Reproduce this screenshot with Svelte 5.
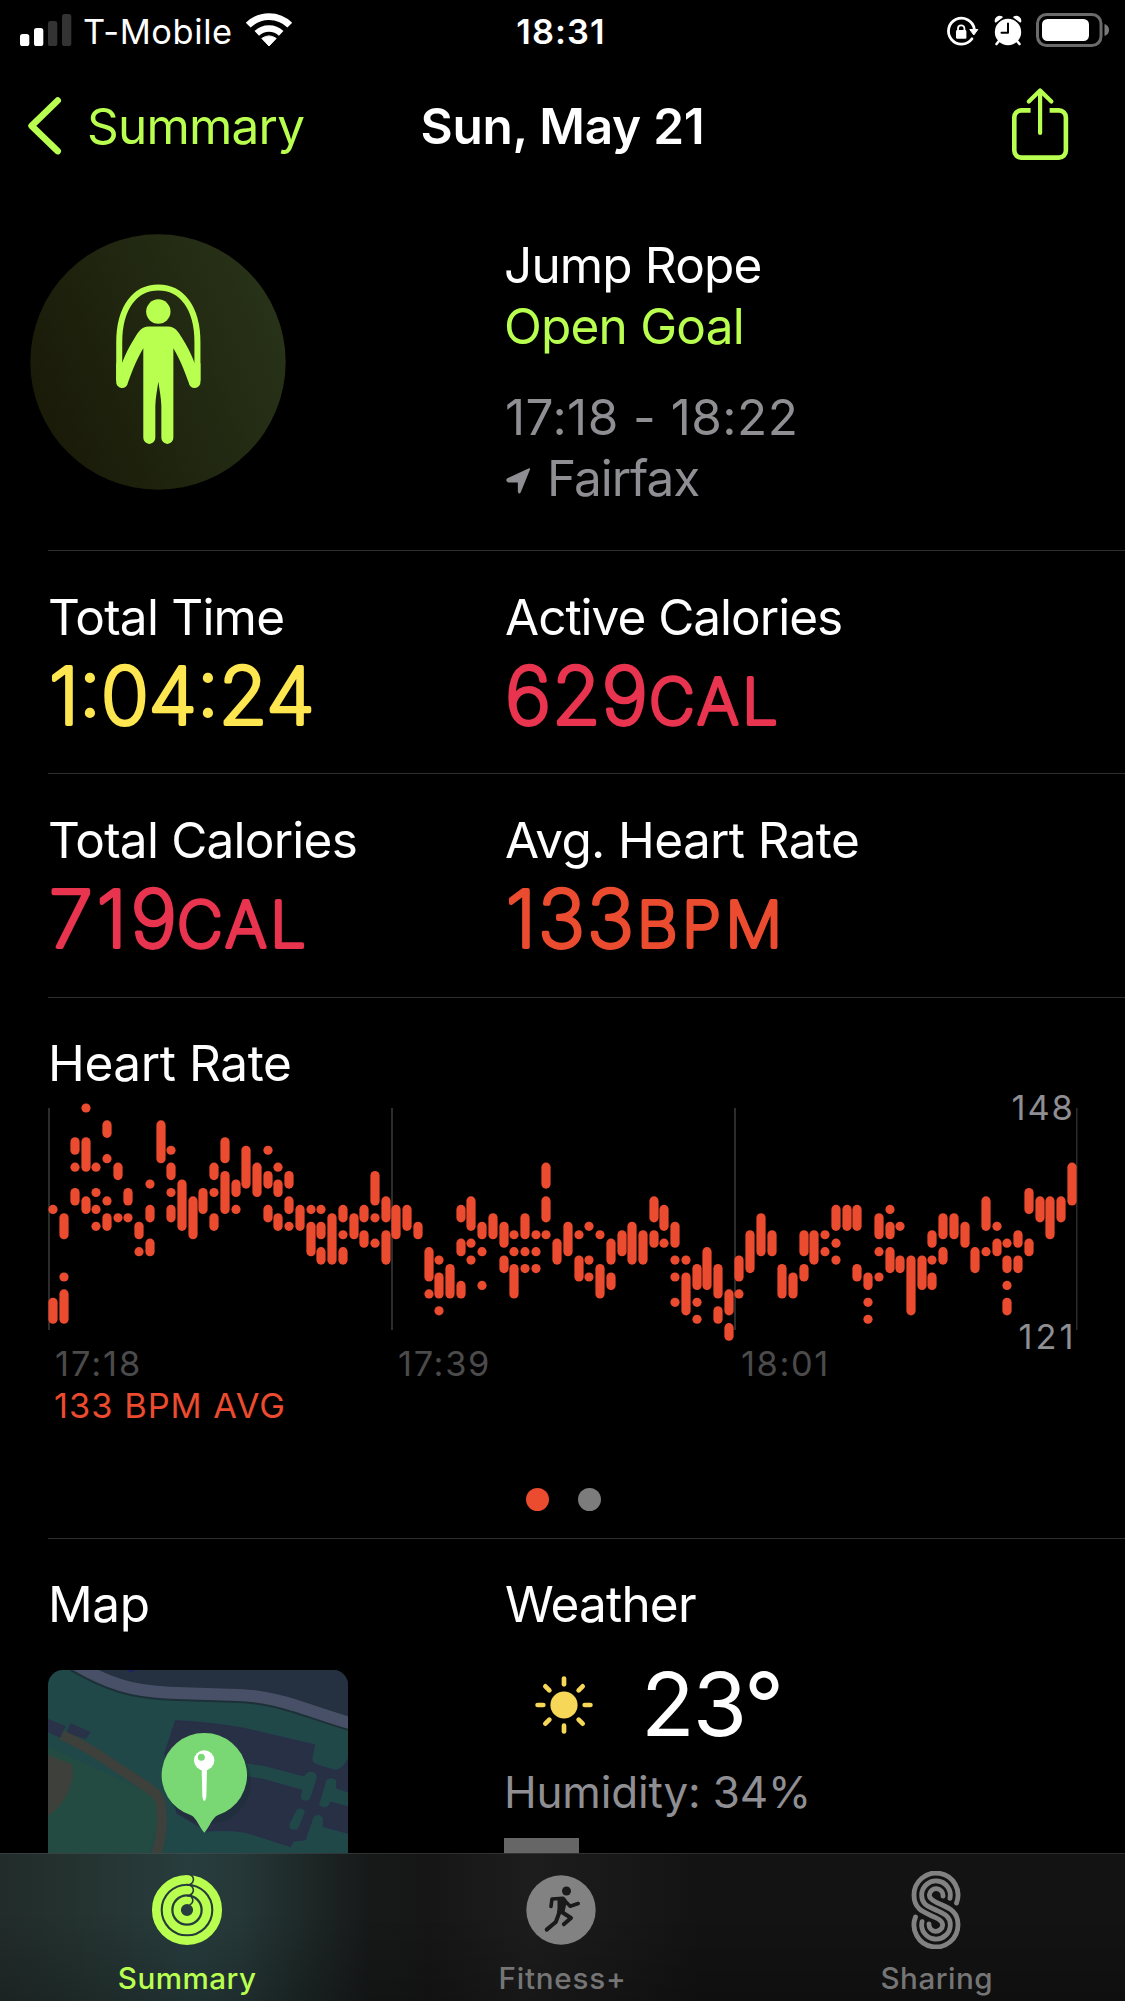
<script>
  // Heart-rate samples: one entry per column, each a list of [from, to] steps below 148 BPM.
  const heartRate = [
    '12 23-25', '13-15 20 22-25', '4-5 7 10-11', '0 4-7 11-12', '7 10 12 14', '2-3 6 11 13-14', '7-8 13', '10-11 13',
    '14-15 17', '9 12-13 16-17', '2-6', '5 7-8 10 12-13', '9-14', '11-15', '10-12', '7-8 10 13-14',
    '4-6 8-12', '9-10 12', '5-9', '7-10', '5 8-9 12-13', '7 9-10 13-14', '8-9 11-12 14', '12-14',
    '12 14-17', '12 14-15 17-18', '13-18', '12-13 15 17-18', '13-15', '12-13 15-16', '8-11 13 16', '11-13 15-18',
    '12-15', '12-14', '14-15', '17-20 22', '18 20-22 24', '19-22', '12-13 16-17 21-22', '11-14 16 18',
    '14-15 17 21', '13-15', '14-16 18-19', '15 17 19-22', '13-15 17 19', '15 17 19', '7-9 11-13 15', '16-18',
    '14-17', '15 18-20', '14 18 20', '15 19-22', '16-18 20-21', '15-17', '14-18', '15-18',
    '11-13 15-16', '12-14 16', '14-16 18 20 23', '18 20-24', '19-21 23 25', '17-21', '19-22 24-25', '22-24 26-27',
    '18-20 22', '15-19', '13-17', '15-17', '19-22', '20-22', '15-17 19-20', '15-18',
    '15 17', '12-14 16 18', '12-14', '12-14 19-20', '20-21 23 25', '13-15 17 20', '12 14-15 17-19', '14 18-19',
    '18-24', '18-21', '15-16 18 20-21', '13-15 17-18', '13-15', '14-16', '17-19', '11-14 17',
    '14 16-17', '16 18-19 21 23-24', '15-16 18-19', '10-12 16-17', '11-13', '11-15', '11-13', '7-11'
  ];

  const bars = heartRate.flatMap((column, i) =>
    column.split(' ').map((range) => {
      const [from, to = from] = range.split('-').map(Number);
      const top = 15 + from * 8.45 - 4.6;
      return { x: Math.round(i * 10.72 + 0.36) + 0.4, y: top, h: (to - from) * 8.45 + 9.2 };
    })
  );

  const rays = [0, 45, 90, 135, 180, 225, 270, 315];
  const rings = [
    { r: 30.7, w: 8.7 },
    { r: 20, w: 8.5 },
    { r: 9.8, w: 7.4 }
  ];
</script>

<div class="screen">
  <header class="status">
    <div class="carrier">
      <svg class="signal" width="52" height="34" viewBox="0 0 52 34">
        <rect x="0" y="21" width="9.3" height="12" rx="2.6" fill="#fff" />
        <rect x="14" y="15" width="9.3" height="18" rx="2.6" fill="#fff" />
        <rect x="28" y="8" width="9.3" height="25" rx="2.6" fill="#333" />
        <rect x="42" y="1" width="9.3" height="32" rx="2.6" fill="#333" />
      </svg>
      <span class="network">T-Mobile</span>
      <svg class="wifi" width="48" height="36" viewBox="-24 -34 48 36">
        <path d="M0 0L-7.2-7.6Q0-12.6 7.2-7.6Z" fill="#fff" stroke="#fff" stroke-linejoin="round" />
        <path d="M-12.2-12.6A17.8 17.8 0 0 1 12.2-12.6" fill="none" stroke="#fff" stroke-width="6.6" />
        <path d="M-20.8-20.8A29.5 29.5 0 0 1 20.8-20.8" fill="none" stroke="#fff" stroke-width="6.8" />
      </svg>
    </div>
    <span class="clock">18:31</span>
    <div class="indicators">
      <svg width="34" height="36" viewBox="945 14 34 36">
        <path d="M974.3 29A13 13 0 1 0 972 38.8" fill="none" stroke="#fff" stroke-width="2.8" stroke-linecap="round" />
        <path d="M969.8 29.5H977.8L973.8 35Z" fill="#fff" stroke="#fff" stroke-linejoin="round" />
        <rect x="956" y="30" width="10.4" height="8.8" rx="1.4" fill="#fff" />
        <path d="M958 31V28.5A3.2 3.2 0 0 1 964.4 28.5V31" fill="none" stroke="#fff" stroke-width="1.8" />
      </svg>
      <svg class="alarm" width="30" height="36" viewBox="993 14 30 36">
        <circle cx="1008" cy="32" r="13.2" fill="#fff" />
        <path d="M1008 23.500V32.700H1001.500" fill="none" stroke="#000" stroke-width="2" stroke-linecap="round" stroke-linejoin="round" />
        <path d="M995.600 21.800A4.200 4.200 0 0 1 1002 17.200ZM1020.400 21.800A4.200 4.200 0 0 0 1014 17.200Z" fill="#fff" stroke="#fff" stroke-width="1.500" stroke-linejoin="round" />
        <path d="M999 41L996.500 44M1017 41L1019.500 44" stroke="#fff" stroke-width="2.600" stroke-linecap="round" />
      </svg>
      <svg class="battery" width="74" height="36" viewBox="1036 12 74 36">
        <rect x="1037.500" y="14.500" width="63.500" height="31" rx="9" fill="none" stroke="#6b6b6b" stroke-width="3" />
        <rect x="1042" y="19" width="47" height="22" rx="5.500" fill="#fff" />
        <path d="M1104.500 24Q1109 25.500 1109 30T1104.500 36Z" fill="#7a7a7a" />
      </svg>
    </div>
  </header>

  <nav class="nav">
    <div class="back">
      <svg width="34" height="60" viewBox="28 96 34 60">
        <path d="M57.700 100.500L31.600 125.800L57.700 151.100" fill="none" stroke="#b9ff4f" stroke-width="6.600" stroke-linecap="round" stroke-linejoin="round" />
      </svg>
      <span>Summary</span>
    </div>
    <h1>Sun, May 21</h1>
    <svg class="share" width="58" height="74" viewBox="1011 87 58 74">
      <g fill="none" stroke="#b9ff4f" stroke-width="4.600" stroke-linejoin="round">
        <path d="M1030.600 110.400H1021.300A7 7 0 0 0 1014.300 117.400V150.600A7 7 0 0 0 1021.300 157.600H1058.900A7 7 0 0 0 1065.900 150.600V117.400A7 7 0 0 0 1058.900 110.400H1049.600" />
        <path d="M1040.100 91V133M1028.800 101.500L1040.100 90.500L1051.400 101.500" stroke-width="4.200" stroke-linecap="round" />
      </g>
    </svg>
  </nav>

  <main>
    <section class="workout">
      <svg class="badge" width="256" height="256" viewBox="90 71 766 766">
        <defs>
          <linearGradient id="disc" x1="0" y1="0.7" x2="1" y2="0.3">
            <stop offset="0" stop-color="#191a07" />
            <stop offset="1" stop-color="#283319" />
          </linearGradient>
        </defs>
        <circle cx="473" cy="454" r="382" fill="url(#disc)" />
        <g fill="#b9ff4f">
          <path d="M357 510V395C357 290 405 231 474 231S591 290 591 395V510" fill="none" stroke="#b9ff4f" stroke-width="18" />
          <circle cx="474" cy="303" r="36.500" />
          <path d="M445 348H503C525 349 532 362 545 382C560 405 572 430 583 458L600 458V512A17.500 17.500 0 0 1 565 516C550 475 538 445 519 413V681A18 18 0 0 1 483 681V585C482 560 478 540 474 513C470 540 466 560 465 585V681A18 18 0 0 1 429 681V413C410 445 398 475 383 516A17.500 17.500 0 0 1 348 512V458H365C376 430 388 405 403 382C416 362 423 349 445 348Z" />
        </g>
      </svg>
      <div class="details">
        <p class="name">Jump Rope</p>
        <p class="goal">Open Goal</p>
        <p class="time">17:18 - 18:22</p>
        <p class="place">
          <svg class="arrow" width="26" height="28" viewBox="78 740 78 84">
            <path d="M83 776L148 746L120 815Q117 819 116 814V784H85Q79 780 83 776Z" fill="#8e8e93" stroke="#8e8e93" stroke-width="5" stroke-linejoin="round" />
          </svg>
          <span>Fairfax</span>
        </p>
      </div>
    </section>

    <section class="row">
      <div class="stat">
        <h2 class="ls8">Total Time</h2>
        <svg class="value yellow" width="400" height="110">
          <text class="num t1" x="1" y="85.500">1:04:24</text>
        </svg>
      </div>
      <div class="stat">
        <h2 class="ls10">Active Calories</h2>
        <svg class="value red" width="400" height="110">
          <text class="num t2" x="0" y="85.500">629</text>
          <text class="unit u1" x="144" y="85.500">CAL</text>
        </svg>
      </div>
    </section>

    <section class="row second">
      <div class="stat">
        <h2 class="ls8">Total Calories</h2>
        <svg class="value red" width="400" height="110">
          <text class="num t4" x="1" y="85.500">719</text>
          <text class="unit u1" x="129" y="85.500">CAL</text>
        </svg>
      </div>
      <div class="stat">
        <h2 class="ls6">Avg. Heart Rate</h2>
        <svg class="value orange" width="400" height="110">
          <text class="num t3" x="1" y="85.500">133</text>
          <text class="unit u2" x="132" y="85.500">BPM</text>
        </svg>
      </div>
    </section>

    <section class="heart">
      <h2>Heart Rate</h2>
      <svg class="chart" width="1030" height="293" viewBox="0 0 1030 293">
        <g fill="#2c2c2c">
          <rect x="0" y="15" width="2" height="222" />
          <rect x="343" y="15" width="2" height="222" />
          <rect x="686" y="15" width="2" height="222" />
          <rect x="1028" y="15" width="1.500" height="222" />
        </g>
        <g fill="#eb4b2e">
          {#each bars as bar}
            <rect x={bar.x} y={bar.y} width="9.200" height={bar.h} rx="4.600" />
          {/each}
        </g>
        <g class="ticks">
          <text x="7" y="283" letter-spacing="1.950">17:18</text>
          <text x="350" y="283" letter-spacing="1.650">17:39</text>
          <text x="693" y="283" letter-spacing="1.600">18:01</text>
        </g>
        <g class="limits">
          <text x="963.500" y="27" letter-spacing="1.900">148</text>
          <text x="970.500" y="256" letter-spacing="3">121</text>
        </g>
      </svg>
      <p class="average">133 BPM AVG</p>
      <div class="pager"><i class="on"></i><i></i></div>
    </section>

    <section class="lower">
      <div class="mapcol">
        <h2 class="maptitle">Map</h2>
        <svg class="map" width="300" height="300" viewBox="54 90 900 900">
          <rect x="54" y="90" width="900" height="900" fill="#214848" />
          <path d="M54 320L380 470V560L350 660V990H54Z" fill="#234b41" />
          <path d="M115 80C230 150 320 165 420 168L600 170C720 172 800 210 954 262V80Z" fill="#253040" />
          <path d="M130 74C235 135 310 157 420 161L600 167C735 166 830 215 960 252" fill="none" stroke="#1d3038" stroke-width="42" />
          <path d="M130 70C235 132 310 154 420 158L600 164C735 163 830 212 960 249" fill="none" stroke="#485067" stroke-width="36" />
          <path d="M292 90H316L304 98Z" fill="#1b2268" />
          <path d="M54 345L125 373C135 410 120 480 54 528Z" fill="#3e413b" />
          <path d="M54 237L108 258L90 293L54 277ZM122 250L182 276L168 298L108 280Z" fill="#2a3249" />
          <path d="M95 285C160 315 200 340 240 368C300 410 360 440 383 468C402 500 398 580 380 640L372 700" fill="none" stroke="#3d403b" stroke-width="30" />
          <path d="M436 242C500 244 570 252 640 264L854 314L846 355Q845 368 860 374L915 391Q940 390 960 345V582L880 560V535Q868 515 850 530L826 600L790 604L782 620L650 578Q600 568 530 574L440 520L404 340Z" fill="#273044" stroke="#2a2c4c" stroke-width="2" />
          <g fill="#214848" stroke="#2a2c4c" stroke-width="2">
            <path d="M640 368L700 376L822 408Q830 393 845 394Q863 398 861 415L842 475Q835 486 820 482Q808 478 812 465L815 450L700 418L640 408Z" />
            <path d="M889 418Q905 408 920 420V445L960 458V502L902 486L896 498Q880 510 866 494Z" />
            <path d="M800 508Q815 498 826 514L806 566Q795 576 780 566Q775 560 777 552Z" />
          </g>
          <ellipse cx="535" cy="425" rx="128" ry="128" fill="#172a35" opacity="0.35" />
          <path d="M523 279A126.500 126.500 0 0 1 563 526C545 535 540 560 523 578C506 560 501 535 483 526A126.500 126.500 0 0 1 523 279Z" fill="#79d874" />
          <path d="M515 385H531L529 470Q523 495 517 470Z" fill="#fff" />
          <circle cx="522.500" cy="361" r="30.500" fill="#fff" />
          <circle cx="514" cy="352" r="10.500" fill="#79d874" />
        </svg>
      </div>
      <div class="weather">
        <h2 class="ls9">Weather</h2>
        <div class="now">
          <svg width="60" height="60" viewBox="-30 -30 60 60">
            <circle r="13.600" fill="#f7d757" />
            {#each rays as a}
              <path d="M0-20.700V-26.400" transform={`rotate(${a})`} stroke="#f7d757" stroke-width="4.700" stroke-linecap="round" />
            {/each}
          </svg>
          <span>23°</span>
        </div>
        <p class="humidity">Humidity: 34%</p>
        <div class="logo"></div>
      </div>
    </section>
  </main>

  <footer class="tabs">
    <div class="tab active">
      <svg width="78" height="78" viewBox="-39 -39 78 78">
        {#each rings as ring}
          <circle r={ring.r} fill="none" stroke="#b9ff4f" stroke-width={ring.w} />
          <path
            d={`M0 ${-ring.r - ring.w / 2 - 0.6}A${ring.w / 2 + 0.8} ${ring.w / 2 + 0.8} 0 0 1 2.500 ${-ring.r + ring.w / 2 + 0.8}`}
            fill="none" stroke="#263a3a" stroke-width="1.600" />
        {/each}
      </svg>
      <span>Summary</span>
    </div>
    <div class="tab">
      <svg width="78" height="78" viewBox="-39 -39 78 78">
        <circle r="34.700" fill="#828282" />
        <circle cx="5.500" cy="-19" r="4.500" fill="#1a1a1a" />
        <g fill="none" stroke="#1a1a1a" stroke-width="3.600" stroke-linecap="round" stroke-linejoin="round">
          <path d="M2-11.800L-9-11L-10-3.500M4-9L9.200-3.800L17.200-6.500" />
          <path d="M-1.500 2L-5.200 12L-14.300 19.600M0 1.500L10 8L2.800 14.300" stroke-width="4" />
        </g>
        <path d="M-3.500-12.800H3Q6.500-11 5.500-7L3.500 2Q1 5-4 3.500L-3.500-2Z" fill="#1a1a1a" />
      </svg>
      <span class="wide">Fitness+</span>
    </div>
    <div class="tab">
      <svg width="78" height="78" viewBox="172 64 234 234">
        <g fill="none" stroke="#828282" stroke-width="14.500" stroke-linecap="round">
          <path d="M350.500 160A66 66 0 1 0 223 137C223 184 262 190 288 204Q309 214 309 226A20.500 20.500 0 0 1 268 223" />
          <path d="M331 146A43 43 0 1 0 246 137C246 165 266 170 289 181S332 199 332 225A43 43 0 1 1 247 216" />
          <path transform="rotate(180 289 181)" d="M350.500 160A66 66 0 1 0 223 137C223 184 262 190 288 204Q309 214 309 226A20.500 20.500 0 0 1 268 223" />
        </g>
      </svg>
      <span class="nudge">Sharing</span>
    </div>
  </footer>
</div>

<style>
  :global(body) {
    margin: 0;
    background: #000;
  }
  .screen {
    width: 1125px;
    height: 2001px;
    display: flex;
    flex-direction: column;
    overflow: hidden;
    background: #000;
    color: #fff;
    font-family: Inter, "Liberation Sans", sans-serif;
    font-size: 49.5px;
    line-height: 61px;
  }
  svg {
    display: block;
    flex: none;
  }
  h1,
  h2,
  p {
    margin: 0;
    font-size: inherit;
    font-weight: 400;
    white-space: nowrap;
  }
  .status {
    height: 63px;
    flex: none;
    display: grid;
    grid-template-columns: 1fr auto 1fr;
    align-items: center;
    padding: 0 15px;
    font-size: 34.4px;
    line-height: 63px;
  }
  .carrier,
  .indicators,
  .back {
    display: flex;
    align-items: center;
  }
  .signal {
    margin: -3px 0 0 5px;
  }
  .network {
    margin-left: 11px;
    letter-spacing: 0.6px;
  }
  .wifi {
    margin: -3px 0 0 12px;
  }
  .clock {
    font-weight: 600;
    letter-spacing: 1.1px;
    padding-right: 3px;
  }
  .indicators {
    justify-content: flex-end;
  }
  .alarm {
    margin-left: 14px;
  }
  .battery {
    margin: -3px 0 0 13px;
  }
  .nav {
    height: 126px;
    flex: none;
    display: grid;
    grid-template-columns: 1fr auto 1fr;
    align-items: center;
    padding: 0 56px 0 28px;
  }
  .back {
    gap: 25px;
    color: #b9ff4f;
    letter-spacing: -0.8px;
  }
  h1 {
    font-weight: 600;
    padding-left: 28px;
    letter-spacing: -0.25px;
  }
  .share {
    justify-self: end;
    margin-top: -4px;
  }
  main {
    flex: 1;
    min-height: 0;
    overflow: hidden;
  }
  .workout {
    height: 361px;
    display: grid;
    grid-template-columns: 475px 1fr;
    padding: 46px 0 0 30px;
    box-sizing: border-box;
  }
  .badge {
    margin: -1.5px 0 0 -0.5px;
  }
  .name {
    letter-spacing: -0.85px;
    margin-left: -1px;
  }
  .goal {
    color: #b9ff4f;
    letter-spacing: -0.8px;
    margin-left: -1px;
  }
  .time {
    margin-top: 30px;
    color: #8e8e93;
    letter-spacing: 0.45px;
  }
  .place {
    display: flex;
    align-items: center;
    gap: 15px;
    color: #8e8e93;
    letter-spacing: -1.05px;
  }
  .arrow {
    margin: 4px 0 0 1px;
  }
  .row,
  .heart,
  .lower {
    margin-left: 48px;
    border-top: 1px solid #2f2f31;
    box-sizing: border-box;
    padding-top: 36px;
  }
  .row,
  .lower {
    display: grid;
    grid-template-columns: 457px 1fr;
  }
  .row {
    height: 223px;
  }
  .second {
    height: 224px;
  }
  .heart,
  .lower {
    padding-top: 35px;
  }
  .ls6 {
    letter-spacing: -0.63px;
  }
  .ls8 {
    letter-spacing: -0.78px;
  }
  .ls9 {
    letter-spacing: -0.8px;
  }
  .ls10 {
    letter-spacing: -1.01px;
  }
  .value {
    margin-top: -10px;
    overflow: visible;
    stroke-width: 4px;
    stroke-linejoin: round;
    stroke-linecap: round;
    font-weight: 200;
  }
  .num {
    font-size: 79px;
  }
  .unit {
    font-size: 63px;
  }
  .t1 {
    letter-spacing: 0;
  }
  .t2 {
    letter-spacing: 1px;
  }
  .t3 {
    letter-spacing: 2px;
  }
  .t4 {
    letter-spacing: 4px;
  }
  .u1 {
    letter-spacing: 3.5px;
  }
  .u2 {
    letter-spacing: 4.5px;
  }
  .yellow {
    fill: #fde64f;
    stroke: #fde64f;
  }
  .red {
    fill: #e8344f;
    stroke: #e8344f;
  }
  .orange {
    fill: #eb4b2e;
    stroke: #eb4b2e;
  }
  .heart {
    height: 541px;
  }
  .heart h2 {
    letter-spacing: -0.4px;
  }
  .chart {
    margin-top: -1px;
    font-size: 34.4px;
    overflow: visible;
  }
  .ticks {
    fill: #4b4b4c;
  }
  .limits {
    fill: #8e8e93;
  }
  .average {
    margin-left: 6px;
    font-size: 34.4px;
    line-height: 40px;
    letter-spacing: 1px;
    color: #eb4b2e;
  }
  .pager {
    display: flex;
    justify-content: center;
    gap: 29px;
    margin: 62px 46px 0 0;
  }
  .pager i {
    width: 23px;
    height: 23px;
    border-radius: 50%;
    background: #7c7c7c;
  }
  .pager .on {
    background: #eb4b2e;
  }
  .maptitle {
    letter-spacing: -0.4px;
  }
  .map {
    margin-top: 35px;
    border-radius: 15px;
  }
  .now {
    display: flex;
    align-items: center;
    height: 121px;
    padding: 9px 0 0 29px;
    font-size: 88px;
    letter-spacing: -1.9px;
  }
  .now span {
    margin-left: 47px;
  }
  .humidity {
    font-size: 44px;
    line-height: 54px;
    letter-spacing: -0.18px;
    color: #8e8e93;
    margin-left: -1px;
  }
  .logo {
    width: 75px;
    height: 60px;
    margin: 19px 0 0 -1px;
    background: #666;
  }
  .tabs {
    height: 148px;
    flex: none;
    box-sizing: border-box;
    display: grid;
    grid-template-columns: repeat(3, 1fr);
    padding: 17px 2px 0 0;
    border-top: 1px solid rgba(255, 255, 255, 0.12);
    background:
      linear-gradient(180deg, rgba(0, 0, 0, 0) 40%, rgba(0, 0, 0, 0.2)),
      linear-gradient(90deg, #222c2b 0, #24322f 70px, #283d3e 190px, #263838 240px, #1d2726 310px, #171919 370px, #161616 430px, #1d1d1d 530px, #181818 620px, #131313 700px);
  }
  .tab {
    display: flex;
    flex-direction: column;
    align-items: center;
    gap: 11px;
    font-size: 29.6px;
    line-height: 36px;
    font-weight: 500;
    letter-spacing: 0.5px;
    color: #757575;
  }
  .active {
    color: #b9ff4f;
  }
  .wide {
    letter-spacing: 0.8px;
    padding-left: 2px;
  }
  .nudge {
    padding-left: 2px;
  }
</style>
